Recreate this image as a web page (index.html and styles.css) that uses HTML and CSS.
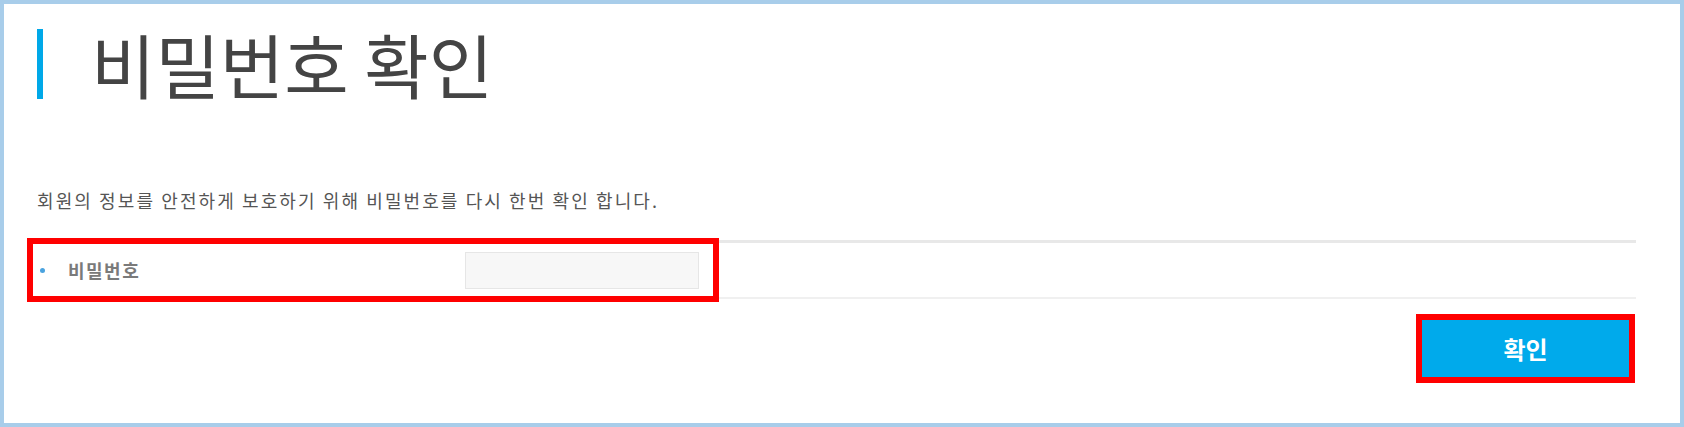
FILE: index.html
```html
<html>

	<head>
		<meta charset="utf-8">
		<title>비밀번호 확인</title>
		<link rel="stylesheet" href="styles.css">
	</head>

	<body>
		<div id="box">
			<h1 class="title">비밀번호 확인</h1>
			<p class="desc">회원의 정보를 안전하게 보호하기 위해 비밀번호를 다시 한번 확인 합니다.</p>
			<form>
				<div class="row">
					<span class="mark"></span>
					<label class="label" for="pw">비밀번호</label>
					<input type="password" id="pw" class="pw" />
				</div>
				<div class="btns">
					<button type="button" class="okBtn">확인</button>
				</div>
			</form>
		</div>
	</body>

</html>
```

FILE: styles.css
```css
* {
	margin: 0;
	padding: 0;
	box-sizing: border-box;
}

body {
	font-family: "Noto Sans CJK KR", "Noto Sans", sans-serif;
	color: #444;
	background: #fff;
}

#box {
	width: 1684px;
	height: 427px;
	border: 4px solid #a8cdea;
	padding: 25px 44px 0 23px;
}

.title {
	height: 70px;
	margin-left: 10px;
	padding-left: 48px;
	border-left: 6px solid #00a8e8;
	font-size: 70px;
	font-weight: 400;
	line-height: 70px;
	color: #444;
}

.desc {
	margin: 88px 0 0 10px;
	font-size: 18px;
	line-height: 26px;
	letter-spacing: 2.1px;
	color: #555;
}

form {
	margin-top: 27px;
}

.row {
	position: relative;
	display: flex;
	align-items: center;
	height: 59px;
	border-top: 3px solid #e8e8e8;
	border-bottom: 2px solid #f0f0f0;
}

.label {
	display: flex;
	align-items: center;
	width: 438px;
	padding-left: 13px;
	font-size: 18px;
	font-weight: 700;
	letter-spacing: 1.5px;
	color: #7a7a7a;
}

.label:before {
	content: "";
	width: 5px;
	height: 5px;
	margin-right: 23px;
	border-radius: 50%;
	background: #4aa3df;
}

.pw {
	width: 234px;
	height: 37px;
	border: 1px solid #e6e6e6;
	background: #f7f7f7;
}

.mark {
	position: absolute;
	top: -5px;
	left: 0;
	width: 692px;
	height: 64px;
	border: 6px solid #ff0000;
	pointer-events: none;
}

.btns {
	display: flex;
	justify-content: flex-end;
	padding: 21px 7px 0 0;
}

.okBtn {
	width: 207px;
	height: 57px;
	border: none;
	outline: 6px solid #ff0000;
	background: #00aaeb;
	color: #fff;
	font-family: "Noto Sans CJK KR", sans-serif;
	font-size: 24px;
	font-weight: 700;
}
```
